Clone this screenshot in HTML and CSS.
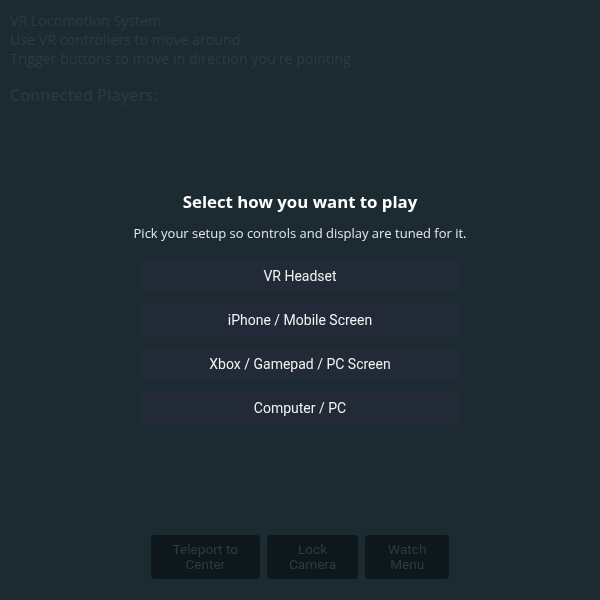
FILE: index.html
```html
<!DOCTYPE html>
<html lang="en">
<head>
<meta charset="utf-8">
<title>VR Locomotion System</title>
<link rel="stylesheet" href="styles.css">
</head>
<body>
<div class="page">
  <div class="info">
    <div class="line">VR Locomotion System</div>
    <div class="line">Use VR controllers to move around</div>
    <div class="line">Trigger buttons to move in direction you're pointing</div>
  </div>
  <h2 class="players">Connected Players:</h2>
</div>

<div class="controls">
  <button class="ctl ctl-teleport">Teleport to<br>Center</button>
  <button class="ctl ctl-lock">Lock<br>Camera</button>
  <button class="ctl ctl-watch">Watch<br>Menu</button>
</div>

<div class="overlay">
  <div class="dialog">
    <h1 class="title">Select how you want to play</h1>
    <p class="subtitle">Pick your setup so controls and display are tuned for it.</p>
    <div class="options">
      <button class="option">VR Headset</button>
      <button class="option">iPhone / Mobile Screen</button>
      <button class="option">Xbox / Gamepad / PC Screen</button>
      <button class="option">Computer / PC</button>
    </div>
  </div>
</div>
</body>
</html>
```

FILE: styles.css
```css
html, body {
  margin: 0;
  padding: 0;
  height: 100%;
}

body {
  background: #1c2a32;
  font-family: "Open Sans", "Noto Sans", sans-serif;
  overflow: hidden;
}

.page {
  padding: 11px 10px;
  color: #2d3b41;
}

.info .line {
  font-size: 14.2px;
  line-height: 19px;
}

.players {
  margin: 16px 0 0;
  font-size: 16px;
  font-weight: 600;
  line-height: 22px;
  color: #2b383d;
}

.controls {
  position: fixed;
  left: 0;
  right: 0;
  bottom: 21px;
  display: flex;
  justify-content: center;
  gap: 7px;
}

.ctl {
  background: #0e171b;
  color: #2f3b40;
  border: none;
  border-radius: 4px;
  font-family: Roboto, "Liberation Sans", sans-serif;
  font-size: 13.6px;
  line-height: 15px;
  padding: 7px 22px;
  height: 44px;
}

.ctl-watch {
  padding: 7px 23px;
}

.overlay {
  position: fixed;
  inset: 0;
  display: flex;
  align-items: center;
  justify-content: center;
}

.dialog {
  width: 320px;
  display: flex;
  flex-direction: column;
  align-items: center;
  margin-top: 14px;
}

.title {
  margin: 0;
  font-size: 16.8px;
  font-weight: 700;
  line-height: 24px;
  color: #ffffff;
  white-space: nowrap;
}

.subtitle {
  margin: 9px 0 0;
  font-size: 13px;
  line-height: 20px;
  color: #e6e9ea;
  white-space: nowrap;
}

.options {
  align-self: stretch;
  display: flex;
  flex-direction: column;
  gap: 10px;
  margin-top: 16px;
}

.option {
  height: 34px;
  background: #212a36;
  color: #f2f2f2;
  border: none;
  border-radius: 4px;
  font-family: Roboto, "Liberation Sans", sans-serif;
  font-size: 14px;
  padding: 0;
}
```
